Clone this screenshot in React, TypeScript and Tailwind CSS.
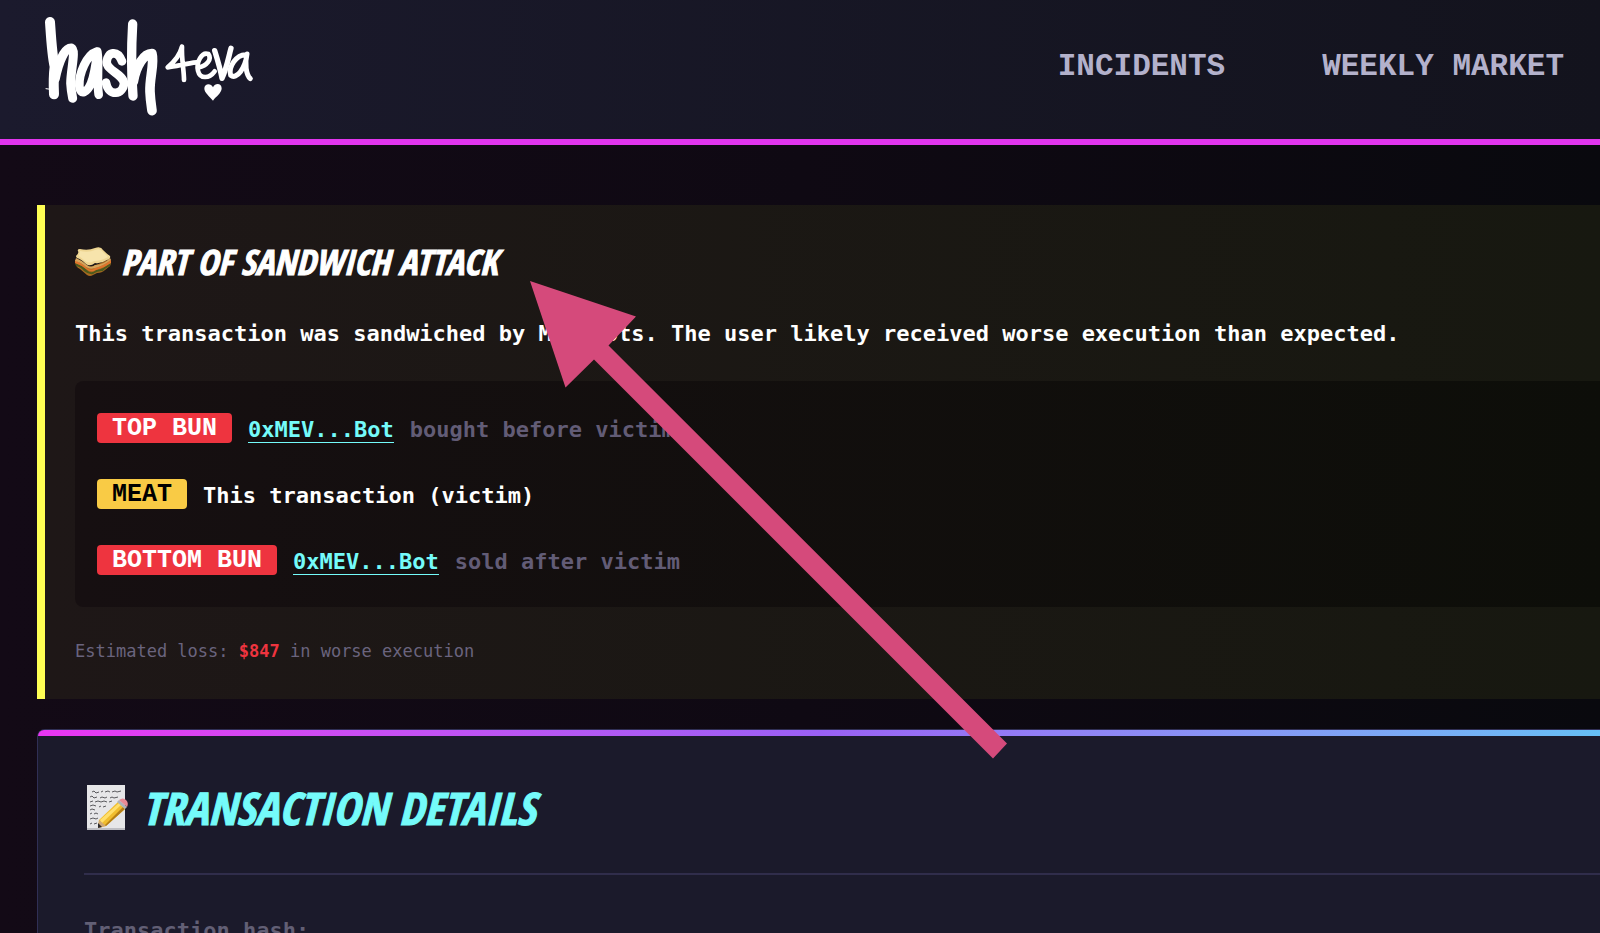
const mono = "font-['DejaVu_Sans_Mono','Liberation_Mono',monospace]";
const pixel = "font-['Liberation_Mono','DejaVu_Sans_Mono',monospace]";
const comic = "font-['Open_Sans_Condensed','Open_Sans','Roboto',sans-serif]";

function Logo() {
  return (
    <svg viewBox="42 45 630 309" className="h-[103px] w-[210px]" fill="none" stroke="#fff" strokeLinecap="round" strokeLinejoin="round" aria-hidden="true">
      <path d="M60 66C64 125 66 165 74 200C70 230 71 262 72 283" strokeWidth="30" />
      <path d="M76 236C86 186 104 143 124 144C139 150 122 210 122 250C123 270 126 285 128 295" strokeWidth="27" />
      <path d="M200 155C170 164 146 222 148 258C151 290 172 276 183 250C194 224 198 190 202 155C208 190 200 245 206 284" strokeWidth="26" />
      <path d="M276 184C262 148 232 156 230 186C230 212 280 222 282 250C280 284 236 292 228 248" strokeWidth="26" />
      <path d="M308 72C304 140 303 210 309 288" strokeWidth="28" />
      <path d="M310 245C318 198 342 160 366 161C374 190 358 235 360 275C361 300 364 318 366 332" strokeWidth="29" />
      <g strokeWidth="14">
        <path d="M456 140C450 164 430 188 413 202C440 200 466 190 500 187M456 140C454 175 462 210 462 240" />
        <path d="M506 202C530 198 547 178 535 162C516 154 498 186 504 212C510 238 538 236 554 214" />
        <path d="M554 152C564 184 572 212 576 235C590 205 596 170 603 145" strokeWidth="16" />
        <path d="M646 164C620 164 594 200 602 226C620 240 646 204 651 162C644 190 648 224 661 236" strokeWidth="15" />
      </g>
      <path d="M549 302C540 290 522 278 523 264C524 250 543 248 549 262C556 247 575 250 575 265C575 279 558 290 549 302Z" fill="#fff" stroke="none" />
      <path d="M48 266L62 268" strokeWidth="3" />
    </svg>
  );
}

function Sandwich() {
  return (
    <svg viewBox="0 0 36 30" className="h-[30px] w-9" aria-hidden="true">
      <path d="M0 13Q0 20 5 22L12 28Q15 30 18 28L22 26Q27 26 30 23L35 19Q37 15 35 12L14 21Z" fill="#a8691f" />
      <path d="M0 16Q7 18 13 24Q17 27 21 23Q29 22 36 15L35 19Q29 22 28 24Q22 24 18 27Q14 28 9 24Q6 20 1 19Z" fill="#4d5a1c" />
      <path d="M0 13Q8 17 12 21Q16 24 20 21Q28 19 36 13L36 16Q29 21 21 23Q16 26 11 22Q6 18 0 16Z" fill="#e0742c" />
      <path d="M1 11Q8 14 12 18Q16 21 20 18Q29 18 35 11L36 13Q28 19 20 21Q15 23 11 20Q5 15 0 14Z" fill="#d6a45a" />
      <path d="M3 4Q2 2 5 2Q13 4 20 1Q26-1 28 3Q32 7 35 9Q36 12 32 13Q26 17 20 16Q15 20 11 17Q6 12 2 11Q0 9 2 8Q4 6 3 4Z" fill="#efd693" />
      <path d="M5 4Q14 6 20 3Q25 1 27 4L33 10Q26 14 19 14Q14 17 10 14L4 9Z" fill="#f7e4ac" />
    </svg>
  );
}

function Memo() {
  return (
    <svg viewBox="0 0 48 46" className="h-[46px] w-12" aria-hidden="true">
      <rect x="3" y="0" width="38" height="45" fill="#e6e6e8" />
      <rect x="3" y="43" width="38" height="2" fill="#bdbdc2" />
      <g fill="none" stroke="#5a5a5e" strokeWidth="1">
        <path d="M8 7l2-1 2 2 3-1M17 7l2-1M21 7l3-1 2 1M28 7l3-1 2 1 4-1" />
        <path d="M6 12l2-1 2 2 3-1M16 13l2-1 3 1 2-1M26 13l2-1 2 1 4-1" />
        <path d="M6 17l3-1M11 17l3-1 3 1 3-1 3 1M25 17l3-1" />
        <path d="M6 21l3-1 3 1M15 22l2-1M19 22l3-1" />
        <path d="M6 25l2-1 3 1" />
        <path d="M6 29l2-1M10 29l2-1 2 1" />
        <path d="M6 34l3-1 3 1 2-1" />
        <path d="M6 39l2-1M10 39l3-1" />
      </g>
      <path d="M15 35L34 17L41 24L22 41L14 43Z" fill="#f0bd2e" />
      <path d="M16 35L35 18L37 20L18 38Z" fill="#ffdf6b" />
      <path d="M20 41L39 22L41 24L22 41Z" fill="#b57f16" />
      <path d="M15 35L22 41L14 43Z" fill="#cfa978" />
      <path d="M14 38L18 42L14 43Z" fill="#2c2a2c" />
      <path d="M33 17L35 15L43 22L41 24Z" fill="#aeb3b8" />
      <path d="M35 15Q39 12 42 15Q45 18 43 22Z" fill="#e88a94" />
    </svg>
  );
}

function Badge({ label, tone }: { label: string; tone: "bun" | "meat" }) {
  const colors = tone === "bun" ? "bg-[#ee343f] text-white" : "bg-[#f9cb45] text-black";
  return (
    <span className={`${pixel} ${colors} rounded px-[15px] text-[25px] leading-8 font-bold whitespace-nowrap`}>{label}</span>
  );
}

function BotLink() {
  return (
    <a href="#bot" className="border-b border-[#74fbfa] text-[#74fbfa]">0xMEV...Bot</a>
  );
}

function Arrow() {
  return (
    <svg viewBox="0 0 478 478" className="pointer-events-none absolute top-[281px] left-[530px] size-[478px]" aria-hidden="true">
      <path d="M0 0L106 35.500L78.500 64.500L477 462.500L463 477.500L64 78.500L35.500 106.500Z" fill="#d54a7b" />
    </svg>
  );
}

export default function App() {
  return (
    <div className="relative h-screen overflow-hidden bg-linear-to-r from-[#130a16] via-[#0f0913] to-[#09090e] text-white">
      <header className="flex items-center justify-between border-b-[6px] border-[#e135ee] bg-linear-to-r from-[#1b1a2d] to-[#13131d] pt-[15px] pr-9 pb-[21px] pl-11">
        <a href="#home" aria-label="hash 4eva"><Logo /></a>
        <nav className={`${pixel} flex gap-[97px] text-[31px] leading-8 font-bold text-[#b3b1cb]`}>
          <a href="#incidents">INCIDENTS</a>
          <a href="#market">WEEKLY MARKET</a>
        </nav>
      </header>

      <main className="pt-[60px] pl-[37px]">
        <section className="border-l-8 border-[#ffff54] bg-linear-to-r from-[#1e1717] to-[#171810] pt-8 pb-9 pl-[30px]">
          <h2 className={`${comic} flex items-center gap-[10px] text-[35px] leading-[50px] font-bold italic [-webkit-text-stroke:1px_currentColor]`}>
            <Sandwich />
            PART OF SANDWICH ATTACK
          </h2>
          <p className={`${mono} mt-[29px] text-[22px] leading-9 font-bold whitespace-nowrap`}>
            This transaction was sandwiched by MEV bots. The user likely received worse execution than expected.
          </p>
          <ul className={`${mono} mt-[29px] flex flex-col gap-9 rounded-l-lg bg-linear-to-r from-[#160f11] to-[#0d0e09] py-8 pl-[22px] text-[22px] leading-[34px] font-bold`}>
            <li className="flex h-[30px] gap-4">
              <Badge label="TOP BUN" tone="bun" />
              <BotLink />
              <span className="text-[#625c76]">bought before victim</span>
            </li>
            <li className="flex h-[30px] gap-4">
              <Badge label="MEAT" tone="meat" />
              <span>This transaction (victim)</span>
            </li>
            <li className="flex h-[30px] gap-4">
              <Badge label="BOTTOM BUN" tone="bun" />
              <BotLink />
              <span className="text-[#625c76]">sold after victim</span>
            </li>
          </ul>
          <p className={`${mono} mt-8 text-[17px] leading-6 text-[#6a647e]`}>
            Estimated loss: <strong className="font-bold text-[#ee343f]">$847</strong> in worse execution
          </p>
        </section>

        <section className="mt-[30px] rounded-tl-lg border-t border-l border-[#302f55] bg-[#1b1a2b]">
          <div className="h-1.5 rounded-tl-md bg-linear-to-r from-[#e935f2] via-[#9a60f4] to-[#66bff5]" />
          <div className="pt-11 pl-[46px]">
            <h2 className={`${comic} flex items-center gap-[10px] border-b-2 border-[#302d4b] pb-[37px] text-[45px] leading-[56px] font-bold text-[#74fbfa] italic [-webkit-text-stroke:1px_currentColor]`}>
              <Memo />
              TRANSACTION DETAILS
            </h2>
            <p className={`${mono} mt-[38px] text-[22px] leading-9 font-bold text-[#625f75]`}>Transaction hash:</p>
          </div>
        </section>
      </main>
      <Arrow />
    </div>
  );
}
